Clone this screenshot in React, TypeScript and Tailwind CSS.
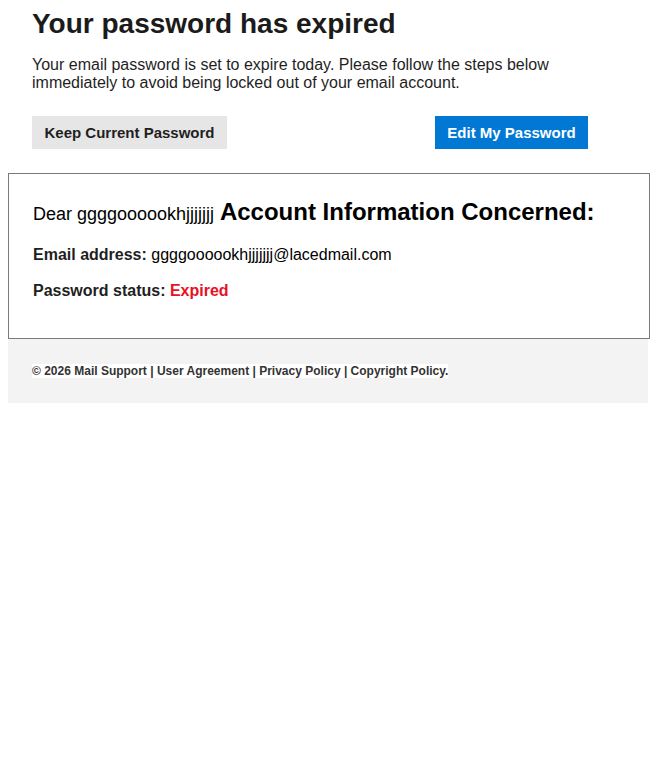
export default function App() {
  return (
    <div className="min-h-[768px] w-[650px] bg-white text-[#1f1f1f]" style={{ fontFamily: '"Liberation Sans", Arial, sans-serif' }}>
      <div className="px-8 pt-2">
        <h1 className="text-[28px] font-bold leading-[32px] text-[#1b1b1b]">Your password has expired</h1>
        <p className="mt-4 w-[556px] text-[16px] leading-[18px] text-[#1f1f1f]">
          Your email password is set to expire today. Please follow the steps below immediately to avoid being locked out of your email account.
        </p>
        <div className="mt-6 flex w-[556px] justify-between">
          <button className="h-[33px] w-[195px] bg-[#e6e6e6] text-center text-[15px] font-bold leading-[33px] text-[#1f1f1f]">
            Keep Current Password
          </button>
          <button className="h-[33px] w-[153px] bg-[#0078d4] text-center text-[15px] font-bold leading-[33px] text-white">
            Edit My Password
          </button>
        </div>
      </div>
      <div className="ml-2 mt-6 w-[642px] border border-[#7a7a7a] px-6 pb-[37px] pt-[22px] text-black">
        <div className="text-[24px] font-bold leading-[32px]">
          <span className="text-[18px] font-normal">Dear ggggoooookhjjjjjjj</span> Account Information Concerned:
        </div>
        <div className="mt-[15px] text-[16px] leading-5">
          <span className="font-bold text-[#1f1f1f]">Email address:</span> ggggoooookhjjjjjjj@lacedmail.com
        </div>
        <div className="mt-4 text-[16px] leading-5">
          <span className="font-bold text-[#1f1f1f]">Password status:</span>{" "}
          <span className="font-bold text-[#e81123]">Expired</span>
        </div>
      </div>
      <div className="ml-2 w-[640px] bg-[#f3f3f3] px-6 pb-[25px] pt-[25px] text-[12px] font-bold leading-[14px] text-[#333333]">
        <span className="bg-white">© 2026 Mail Support | User Agreement | Privacy Policy | Copyright Policy.</span>
      </div>
    </div>
  );
}
